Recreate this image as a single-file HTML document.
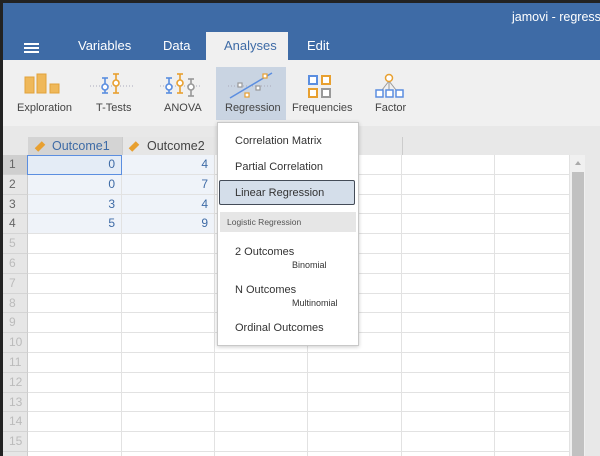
<!DOCTYPE html><html><head><style>
html,body{margin:0;width:600px;height:456px;overflow:hidden}
body{background:#222;font-family:"Liberation Sans",sans-serif;position:relative}
.a{position:absolute}
.hdr{left:3px;top:3px;width:597px;height:57px;background:#3e6ba6}
.tab{top:38px;color:#fff;font-size:13px;white-space:nowrap}
.tb{left:3px;top:60px;width:597px;height:66px;background:#f0f0f0}
.lbl{top:102px;font-size:11px;color:#444;text-align:center;white-space:nowrap}
.grid{left:3px;top:126px;width:597px;height:330px;background:#e8e8e8}
.cell{position:absolute;box-sizing:border-box;border-right:1px solid #e2e2e2;border-bottom:1px solid #e2e2e2;background:#fff;font-size:12px;color:#3e6ba6;text-align:right;padding-right:6px;line-height:19px;overflow:hidden}
.rn{position:absolute;left:3px;width:25px;box-sizing:border-box;background:#e6e6e6;border-bottom:1px solid #d4d4d4;border-right:1px solid #ccc;font-size:12px;color:#bbb;padding-left:6px;line-height:19px;overflow:hidden}
.menu{left:217px;top:122px;width:140px;height:222px;background:#fff;border:1px solid #c8c8c8;box-shadow:0 1px 4px rgba(0,0,0,.2)}
.mi{left:17px;font-size:11px;color:#333;white-space:nowrap}
.sm{font-size:9px;color:#333;white-space:nowrap}
</style></head><body>
<div class="a hdr"></div>
<div class="a" style="left:512px;top:10px;color:#fff;font-size:12.5px;white-space:nowrap">jamovi - regress</div>
<div class="a" style="left:24px;top:43px;width:15px;height:2px;background:#fff;box-shadow:0 4px 0 #fff,0 8px 0 #fff"></div>
<div class="a tab" style="left:78px">Variables</div>
<div class="a tab" style="left:163px">Data</div>
<div class="a" style="left:206px;top:32px;width:82px;height:28px;background:#f0f0f0"></div>
<div class="a tab" style="left:224px;color:#3e6ba6">Analyses</div>
<div class="a tab" style="left:307px">Edit</div>
<div class="a tb"></div>
<div class="a" style="left:216px;top:67px;width:70px;height:53px;background:#c9d4e2"></div>
<svg class="a" style="left:0;top:60px" width="420" height="40">
<g fill="#efb85a" stroke="#e2a23a"><rect x="25" y="17" width="9" height="16"/><rect x="37" y="14" width="9" height="19"/><rect x="50" y="24" width="9" height="9"/></g>
<g stroke="#aab" stroke-dasharray="1,2"><line x1="90" y1="26" x2="134" y2="26"/><line x1="160" y1="26" x2="200" y2="26"/><line x1="228" y1="26" x2="272" y2="26"/></g>
<g fill="#fff" stroke-width="1.6">
<g stroke="#5b8ee0"><line x1="105" y1="18" x2="105" y2="33"/><line x1="102" y1="18" x2="108" y2="18"/><line x1="102" y1="33" x2="108" y2="33"/><circle cx="105" cy="27" r="3"/></g>
<g stroke="#e8a030"><line x1="116" y1="14" x2="116" y2="33"/><line x1="113" y1="14" x2="119" y2="14"/><line x1="113" y1="33" x2="119" y2="33"/><circle cx="116" cy="23" r="3"/></g>
<g stroke="#5b8ee0"><line x1="169" y1="18" x2="169" y2="33"/><line x1="166" y1="18" x2="172" y2="18"/><line x1="166" y1="33" x2="172" y2="33"/><circle cx="169" cy="27" r="3"/></g>
<g stroke="#e8a030"><line x1="180" y1="14" x2="180" y2="33"/><line x1="177" y1="14" x2="183" y2="14"/><line x1="177" y1="33" x2="183" y2="33"/><circle cx="180" cy="23" r="3"/></g>
<g stroke="#999"><line x1="191" y1="19" x2="191" y2="36"/><line x1="188" y1="19" x2="194" y2="19"/><line x1="188" y1="36" x2="194" y2="36"/><circle cx="191" cy="27" r="3"/></g>
</g>
<line x1="230" y1="38" x2="272" y2="13" stroke="#5b8ee0" stroke-width="1.5"/>
<g fill="#fff" stroke-width="1.2"><rect x="238" y="23" width="4" height="4" stroke="#999"/><rect x="256" y="26" width="4" height="4" stroke="#999"/><rect x="245" y="33" width="4" height="4" stroke="#e8a030"/><rect x="263" y="14" width="4" height="4" stroke="#e8a030"/></g>
<g stroke-width="2" fill="#fff"><rect x="309" y="16" width="8" height="8" stroke="#5b8ee0"/><rect x="322" y="16" width="8" height="8" stroke="#e8a030"/><rect x="309" y="29" width="8" height="8" stroke="#e8a030"/><rect x="322" y="29" width="8" height="8" stroke="#999"/></g>
<g stroke="#999"><line x1="389" y1="21" x2="382" y2="30"/><line x1="389" y1="21" x2="389" y2="30"/><line x1="389" y1="21" x2="396" y2="30"/></g>
<circle cx="389" cy="18" r="3.5" fill="#fff" stroke="#e8a030" stroke-width="1.5"/>
<g fill="#fff" stroke="#5b8ee0" stroke-width="1.5"><rect x="376" y="30" width="7" height="7"/><rect x="386" y="30" width="7" height="7"/><rect x="396" y="30" width="7" height="7"/></g>
</svg>
<div class="a lbl" style="left:17px">Exploration</div>
<div class="a lbl" style="left:96px">T-Tests</div>
<div class="a lbl" style="left:164px">ANOVA</div>
<div class="a lbl" style="left:225px">Regression</div>
<div class="a lbl" style="left:292px">Frequencies</div>
<div class="a lbl" style="left:375px">Factor</div>
<div class="a grid"></div>
<div class="a" style="left:28px;top:137px;width:94px;height:18px;background:#d4d4d4;font-size:12.5px;color:#3e6ba6;line-height:18px;padding-left:24px;box-sizing:border-box">Outcome1</div>
<div class="a" style="left:122px;top:137px;width:93px;height:18px;background:#e6e6e6;border-left:1px solid #ccc;font-size:12.5px;color:#444;line-height:18px;padding-left:24px;box-sizing:border-box">Outcome2</div>
<div class="a" style="left:35px;top:144px;width:10px;height:5px;background:#e8a030;transform:rotate(-45deg)"></div>
<div class="a" style="left:129px;top:144px;width:10px;height:5px;background:#e8a030;transform:rotate(-45deg)"></div>
<div class="a" style="left:308px;top:137px;width:1px;height:18px;background:#ccc"></div>
<div class="a" style="left:402px;top:137px;width:1px;height:18px;background:#ccc"></div>
<div id="g"></div>
<div class="a" style="left:570px;top:155px;width:15px;height:301px;background:#f0f0f0"></div>
<div class="a" style="left:572px;top:172px;width:12px;height:284px;background:#c1c1c1"></div>
<div class="a" style="left:575px;top:161px;border:3px solid transparent;border-bottom:4px solid #aaa;border-top:0"></div>
<div class="a" style="left:27px;top:155px;width:95px;height:20px;border:1px solid #5b8ee0;box-sizing:border-box"></div>
<div class="a menu">
<div class="a mi" style="top:12px">Correlation Matrix</div>
<div class="a mi" style="top:38px">Partial Correlation</div>
<div class="a" style="left:1px;top:57px;width:136px;height:25px;background:#d4deea;border:1px solid #444c58;border-radius:2px;box-sizing:border-box"></div>
<div class="a mi" style="top:64px">Linear Regression</div>
<div class="a" style="left:2px;top:89px;width:136px;height:20px;background:#e6e6e6"></div>
<div class="a" style="left:9px;top:94px;font-size:8.5px;color:#555;white-space:nowrap">Logistic Regression</div>
<div class="a mi" style="top:123px">2 Outcomes</div>
<div class="a sm" style="left:74px;top:137px">Binomial</div>
<div class="a mi" style="top:161px">N Outcomes</div>
<div class="a sm" style="left:74px;top:175px">Multinomial</div>
<div class="a mi" style="top:199px">Ordinal Outcomes</div>
</div>
<script>
var h='',cols=[28,122,215,308,402,495,570],v=[['0','4'],['0','7'],['3','4'],['5','9']];
for(var r=0;r<16;r++){var t=155+Math.round(r*19.8),t2=155+Math.round((r+1)*19.8),hh=t2-t;
h+='<div class="rn" style="top:'+t+'px;height:'+hh+'px;'+(r==0?'background:#cfcfcf;color:#666':r<4?'color:#666':'')+'">'+(r+1)+'</div>';
for(var c=0;c<6;c++){var bg=(r<4&&c<2)?(r==0&&c==0?'#e4ecf6':'#eff3f9'):'#fff';
h+='<div class="cell" style="left:'+cols[c]+'px;top:'+t+'px;width:'+(cols[c+1]-cols[c])+'px;height:'+hh+'px;background:'+bg+'">'+((r<4&&c<2)?v[r][c]:'')+'</div>';}}
document.getElementById('g').innerHTML=h;
</script>
</body></html>
